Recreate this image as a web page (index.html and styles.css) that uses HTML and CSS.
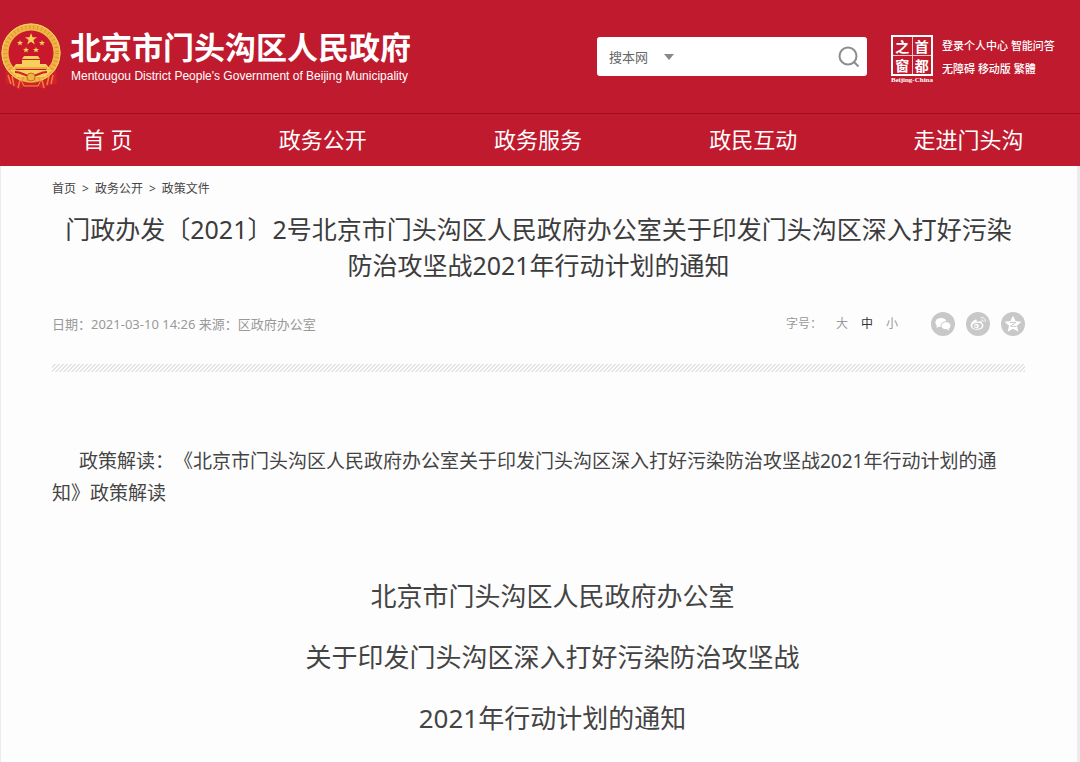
FILE: index.html
```html
<!DOCTYPE html>
<html lang="zh-CN">
<head>
<meta charset="utf-8">
<meta name="viewport" content="width=device-width, initial-scale=1">
<title>北京市门头沟区人民政府</title>
<link rel="stylesheet" href="styles.css">
</head>
<body>
<header class="site-header">
  <div class="masthead">
    <a class="brand" href="#">
      <svg class="emblem" viewBox="0 0 62 68" aria-hidden="true">
        <path d="M6 46l11 4h28l11-4 1 15-9 2-5 3-7-3H26l-7 4-5-4-9-3z" fill="#d3202a"/>
        <path d="M8 52l3 9m1-8l2 10m39-11l-2 9m-2-8l-2 9M20 57l-2 8m24-8l2 8" stroke="#e9853b" stroke-width="1.500" fill="none"/>
        <circle cx="31" cy="30" r="26" fill="#c9182b" stroke="#f0b445" stroke-width="7"/>
        <circle cx="31" cy="30" r="26" fill="none" stroke="#dc9432" stroke-width="4" stroke-dasharray="1 3"/>
        <circle cx="31" cy="30" r="29" fill="none" stroke="#f8cf63" stroke-width="1"/>
        <g fill="#f7cf5b">
          <path d="M31 10l1.500 4.300h4.500l-3.600 2.700 1.400 4.400-3.800-2.700-3.800 2.700 1.400-4.400-3.600-2.700h4.500z"/>
          <path d="M20 17l.8 2h2.200l-1.700 1.400.6 2.200-1.900-1.300-1.900 1.300.6-2.200-1.700-1.400h2.200zM42 17l.8 2h2.200l-1.700 1.400.6 2.200-1.900-1.300-1.900 1.300.6-2.200-1.700-1.400h2.200zM26 24l.8 2h2.200l-1.700 1.400.6 2.200-1.900-1.300-1.900 1.300.6-2.200-1.700-1.400h2.200zM36 24l.8 2h2.200l-1.700 1.400.6 2.200-1.900-1.300-1.900 1.300.6-2.200-1.700-1.400h2.200z"/>
          <path d="M24 33h14l2 3H22zM22 37h18v4h6l4 5H12l4-5h6zM10 47h42l-7 7H17z"/>
        </g>
        <path d="M15 45h32" stroke="#d88a2c"/>
        <path d="M15 49c8 0 8 4 16 4s8-4 16-4" stroke="#d3202a" stroke-width="2" fill="none"/>
        <circle cx="31" cy="54" r="4" fill="#f0b445" stroke="#c57020"/>
        <path d="M21 57c5 3 15 3 20 0l-3 6H24z" fill="#d3202a" stroke="#e9a13b"/>
      </svg>
      <span class="brand-text">
        <span class="brand-name">北京市门头沟区人民政府</span>
        <span class="brand-en">Mentougou District People's Government of Beijing Municipality</span>
      </span>
    </a>
    <form class="search" role="search">
      <span class="scope-wrap">
        <select class="scope" aria-label="搜索范围"><option>搜本网</option></select>
        <svg class="caret" viewBox="0 0 10 6" aria-hidden="true"><path d="M0 0h10L5 6z"/></svg>
      </span>
      <input class="query" type="text" aria-label="搜索">
      <button class="search-btn" type="button" aria-label="搜索">
        <svg viewBox="0 0 22 22"><circle cx="10" cy="10" r="8.500"/><path d="M16 16l4.500 4.500"/></svg>
      </button>
    </form>
    <a class="seal" href="#" aria-label="首都之窗">
      <span class="seal-grid"><span>之</span><span>首</span><span>窗</span><span>都</span></span>
      <span class="seal-en">Beijing-China</span>
    </a>
    <div class="quick">
      <div><a href="#">登录个人中心</a> <a href="#">智能问答</a></div>
      <div><a href="#">无障碍</a> <a href="#">移动版</a> <a href="#">繁體</a></div>
    </div>
  </div>
  <nav class="main-nav">
    <a href="#">首 页</a>
    <a href="#">政务公开</a>
    <a href="#">政务服务</a>
    <a href="#">政民互动</a>
    <a href="#">走进门头沟</a>
  </nav>
</header>
<main class="page">
  <nav class="crumbs"><a href="#">首页</a><span>&gt;</span><a href="#">政务公开</a><span>&gt;</span><a href="#">政策文件</a></nav>
  <h1 class="title">门政办发〔2021〕2号北京市门头沟区人民政府办公室关于印发门头沟区深入打好污染防治攻坚战2021年行动计划的通知</h1>
  <div class="meta">
    <p class="meta-info">日期：2021-03-10 14:26 来源：区政府办公室</p>
    <div class="tools">
      <span class="size-label">字号：</span>
      <div class="sizes">
        <button type="button">大</button>
        <button type="button" class="current">中</button>
        <button type="button">小</button>
      </div>
      <div class="share">
        <a href="#" aria-label="微信">
          <svg viewBox="0 0 24 24"><circle class="disc" cx="12" cy="12" r="12"/><path d="M6 13l-.6 3 2.800-1.500z"/><ellipse cx="10" cy="10.500" rx="5.600" ry="4.600"/><ellipse class="edge" cx="15" cy="13.700" rx="5" ry="4.100"/><path d="M16 17l2.300 1.700-.4-2.400z"/></svg>
        </a>
        <a href="#" aria-label="微博">
          <svg viewBox="0 0 24 24"><circle class="disc" cx="12" cy="12" r="12"/><path d="M10.500 9.500c.7-1.600-.2-2.600-2.400-1.300C6 9.500 4.500 11.700 4.700 13.700c.3 3 3.600 4.300 6.700 4.100 3.600-.3 6.200-2.300 6.100-4.400 0-1.300-.9-1.900-1.800-2.100.5-1.500-.3-2.300-1.900-2-1.200.1-2.100.5-3.300.2z"/><ellipse class="disc" cx="11" cy="13.800" rx="4.700" ry="3" transform="rotate(-8 11 13.800)"/><circle cx="10.500" cy="14" r="2.300"/><circle class="disc" cx="10" cy="14.300" r="1"/><path class="line" d="M14.800 5.600c2.800-.6 5 1.700 4.300 4.500M15 7.900c1.400-.2 2.300.8 2 2"/></svg>
        </a>
        <a href="#" aria-label="QQ空间">
          <svg viewBox="0 0 24 24"><circle class="disc" cx="12" cy="12" r="12"/><path d="M12 3.700l2.500 5.400 5.900.7-4.400 4 1.300 5.900-5.300-3-5.300 3L8 13.800l-4.400-4 5.900-.7z"/><path class="cut" d="M9 10.500c2-.4 4-.4 5.800 0L9.500 14c2 .5 4 .6 6 .2"/></svg>
        </a>
      </div>
    </div>
  </div>
  <div class="hatch"></div>
  <article class="content">
    <p class="lead">政策解读：《北京市门头沟区人民政府办公室关于印发门头沟区深入打好污染防治攻坚战2021年行动计划的通知》政策解读</p>
    <h2 class="doc-title">北京市门头沟区人民政府办公室<br>关于印发门头沟区深入打好污染防治攻坚战<br>2021年行动计划的通知</h2>
  </article>
</main>
</body>
</html>
```
FILE: styles.css
```css
* { box-sizing: border-box; }
body {
  margin: 0;
  background: #fefdfe;
  color: #444;
  font-family: "Noto Sans", "Noto Sans CJK SC", sans-serif;
  text-spacing-trim: space-all;
}
a { color: inherit; text-decoration: none; }
button, input, select { font: inherit; color: inherit; border: 0; background: none; padding: 0; margin: 0; }
svg { display: block; }

.site-header { background: #bf1a2d; color: #fff; }
.masthead { display: flex; align-items: flex-start; height: 113px; padding-right: 24px; }
.brand { display: flex; gap: 8px; padding-top: 23px; }
.emblem { width: 62px; height: 68px; }
.brand-text { display: flex; flex-direction: column; padding-top: 4px; }
.brand-name { font-size: 31px; font-weight: 700; line-height: 40px; white-space: nowrap; }
.brand-en { padding-left: 1px; font-family: "Liberation Sans", Arial, sans-serif; font-size: 12px; line-height: 18px; white-space: nowrap; }

.search {
  display: flex;
  align-items: center;
  width: 270px;
  height: 39px;
  margin: 37px 22px 0 auto;
  padding: 0 7px 0 12px;
  background: #fff;
  border-radius: 3px;
  color: #666;
}
.scope-wrap { display: flex; align-items: center; }
.scope { appearance: none; width: 55px; font-size: 13px; line-height: 18px; }
.caret { width: 10px; height: 6px; fill: #888; }
.query { flex: 1; min-width: 0; height: 32px; padding: 0 8px; font-size: 13px; }
.search-btn svg { width: 22px; height: 22px; fill: none; stroke: #8c8c8c; stroke-width: 2; }

.seal { display: flex; flex-direction: column; align-items: center; width: 46px; margin-top: 35px; }
.seal-grid {
  display: grid;
  grid-template-columns: 1fr 1fr;
  gap: 1px;
  width: 42px;
  border: 2px solid #fff;
  background: #f3c5ca;
  font-family: "Noto Sans CJK SC", sans-serif;
  font-size: 14px;
  font-weight: 700;
  line-height: 18px;
  text-align: center;
}
.seal-grid span { background: #bf1a2d; }
.seal-en { font-family: "Liberation Serif", serif; font-size: 7px; font-weight: 700; line-height: 8px; white-space: nowrap; }
.quick { margin: 34px 0 0 7px; width: 114px; font-size: 11px; font-weight: 500; line-height: 23px; white-space: nowrap; }

.main-nav {
  display: grid;
  grid-template-columns: repeat(5, 1fr);
  padding: 0 4px 2px 0;
  border-top: 1px solid #a60d1c;
  font-size: 22px;
  line-height: 50px;
  text-align: center;
}

.page { padding: 13px 52px 16px 51px; border: solid #ececf0; border-width: 0 3px 0 1px; }
.crumbs { display: flex; gap: 6px; font-size: 12px; line-height: 20px; }
.title { margin: 12px 0 0; padding: 0 8px; color: #3c3c3c; font-size: 25px; font-weight: 400; line-height: 36px; text-align: center; }
.meta { display: flex; justify-content: space-between; align-items: center; margin-top: 29px; color: #999; font-size: 13px; line-height: 24px; }
.meta-info { margin: 0; }
.tools { display: flex; align-items: center; font-size: 12px; }
.sizes { display: flex; gap: 13px; margin: 0 33px 0 14px; }
.sizes .current { color: #333; }
.share { display: flex; gap: 11px; }
.share svg { width: 24px; height: 24px; fill: #fff; }
.share .disc { fill: #c8c8c8; }
.share .edge { stroke: #c8c8c8; stroke-width: 1; }
.share .line { fill: none; stroke: #fff; stroke-width: 1; }
.share .cut { fill: none; stroke: #c8c8c8; stroke-width: 1; }
.hatch {
  height: 8px;
  margin-top: 28px;
  background: linear-gradient(135deg, #fefdfe 37%, #e4e4e4 37% 50%, #fefdfe 50% 87%, #e4e4e4 87%) 0 0 / 4px 4px;
}

.content { padding-top: 73px; }
.lead { margin: 0; font-size: 19px; line-height: 32px; text-indent: 27px; }
.doc-title { margin: 57px 0 0; padding-left: 28px; font-size: 26px; font-weight: 400; line-height: 61px; text-align: center; }
```
